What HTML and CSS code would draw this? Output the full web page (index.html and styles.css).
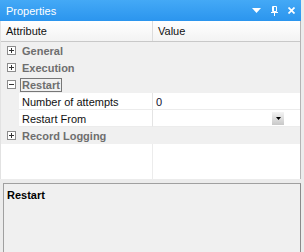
FILE: index.html
```html
<!DOCTYPE html>
<html lang="en">
<head>
    <meta charset="UTF-8">
    <title>Properties</title>
    <link rel="stylesheet" href="styles.css">
</head>
<body>
    <div class="panel">
        <div class="titlebar">
            <span class="title">Properties</span>
            <div class="tools">
                <svg width="9" height="6" viewBox="0 0 9 6"><polygon points="0,0 9,0 4.5,5" fill="#fff"/></svg>
                <svg width="7" height="10" viewBox="0 0 7 10"><path d="M1.5 0.5h4v5h-4z M2.5 0.5v5" fill="none" stroke="#fff"/><path d="M0 6.5h7 M3.5 6.5v4" stroke="#fff" fill="none"/></svg>
                <svg width="7" height="7" viewBox="0 0 7 7"><path d="M0.5 0.5l6 6M6.5 0.5l-6 6" stroke="#fff" stroke-width="1.7"/></svg>
            </div>
        </div>

        <div class="grid">
            <div class="head">
                <div class="hcell namecol">Attribute</div>
                <div class="hcell">Value</div>
            </div>

            <div class="cat">
                <span class="box plus"></span>
                <span class="catname">General</span>
            </div>
            <div class="cat">
                <span class="box plus"></span>
                <span class="catname">Execution</span>
            </div>
            <div class="cat">
                <span class="box"></span>
                <span class="catname focus">Restart</span>
            </div>
            <div class="prop">
                <div class="gutter"></div>
                <div class="pname">Number of attempts</div>
                <div class="pval">0</div>
            </div>
            <div class="prop">
                <div class="gutter"></div>
                <div class="pname">Restart From</div>
                <div class="pval">
                    <span class="dropbtn">
                        <svg width="5" height="3" viewBox="0 0 5 3"><polygon points="0,0 5,0 2.5,3" fill="#000"/></svg>
                    </span>
                </div>
            </div>
            <div class="cat">
                <span class="box plus"></span>
                <span class="catname">Record Logging</span>
            </div>
            <div class="empty">
                <div class="namecol"></div>
                <div></div>
            </div>
        </div>

        <div class="splitter"></div>

        <div class="desc">
            <div class="desctitle">Restart</div>
        </div>
    </div>
</body>
</html>
```

FILE: styles.css
```css
body{
    margin: 0;
    font-family: "Liberation Sans", Arial, sans-serif;
    font-size: 11px;
    background-color: #f0f0f0;
}

.panel{
    width: 304px;
    height: 252px;
    display: flex;
    flex-direction: column;
    overflow: hidden;
    box-sizing: border-box;
    padding-right: 3px;
    background-color: #ececec;
}

.titlebar{
    height: 21px;
    display: flex;
    align-items: center;
    justify-content: space-between;
    background: linear-gradient(#44a9f6, #2b95ee);
    color: #fff;
    padding: 0 6px 0 6px;
    flex-shrink: 0;
}

.title{
    font-size: 11px;
    margin-top: 1px;
}

.tools{
    display: flex;
    align-items: center;
    gap: 10px;
}

.grid{
    background-color: #fff;
    border-left: 1px solid #e2e2e2;
    border-right: 1px solid #b4b4b4;
    flex-shrink: 0;
}

.head{
    display: flex;
    height: 20px;
    background: linear-gradient(#ffffff, #f3f3f3);
    border-bottom: 1px solid #c8c8c8;
    color: #111;
}

.hcell{
    display: flex;
    align-items: center;
    padding-left: 5px;
}

.namecol{
    width: 146px;
    flex-shrink: 0;
    border-right: 1px solid #dcdcdc;
}

.cat{
    height: 17px;
    display: flex;
    align-items: center;
    background-color: #f0f0f0;
    color: #6e6e6e;
    font-weight: bold;
}

.box{
    width: 7px;
    height: 7px;
    border: 1px solid #8c8c8c;
    background-color: #fff;
    margin-left: 6px;
    margin-right: 4px;
    position: relative;
}

.box::before{
    content: "";
    position: absolute;
    left: 1px;
    top: 3px;
    width: 5px;
    height: 1px;
    background-color: #333;
}

.plus::after{
    content: "";
    position: absolute;
    left: 3px;
    top: 1px;
    width: 1px;
    height: 5px;
    background-color: #333;
}

.catname{
    padding: 1px 1px 0 1px;
    border: 1px solid transparent;
    line-height: 11px;
}

.focus{
    border-color: #777;
}

.prop{
    height: 17px;
    display: flex;
    color: #111;
}

.gutter{
    width: 18px;
    background-color: #f0f0f0;
    flex-shrink: 0;
}

.pname{
    width: 130px;
    flex-shrink: 0;
    padding-left: 3px;
    padding-top: 1px;
    display: flex;
    align-items: center;
    border-right: 1px solid #e4e4e4;
    border-bottom: 1px solid #ececec;
}

.pval{
    flex: 1;
    display: flex;
    align-items: center;
    justify-content: space-between;
    padding-left: 3px;
    padding-right: 16px;
    padding-top: 1px;
    border-bottom: 1px solid #ececec;
    color: #101030;
}

.dropbtn{
    width: 12px;
    height: 13px;
    margin-left: auto;
    display: flex;
    align-items: center;
    justify-content: center;
    background: linear-gradient(#f4f4f4, #c8c8c8);
}

.empty{
    height: 35px;
    display: flex;
}

.empty .namecol{
    width: 151px;
    border-right: 1px solid #ececec;
}

.splitter{
    height: 4px;
    background-color: #ececec;
    flex-shrink: 0;
}

.desc{
    flex: 1;
    margin-left: 3px;
    background-color: #f0f0f0;
    border-top: 1px solid #a0a0a0;
    border-left: 1px solid #a0a0a0;
    border-right: 1px solid #8a8a8a;
    padding: 5px 3px;
}

.desctitle{
    font-weight: bold;
    color: #000;
    font-size: 11px;
}
```
